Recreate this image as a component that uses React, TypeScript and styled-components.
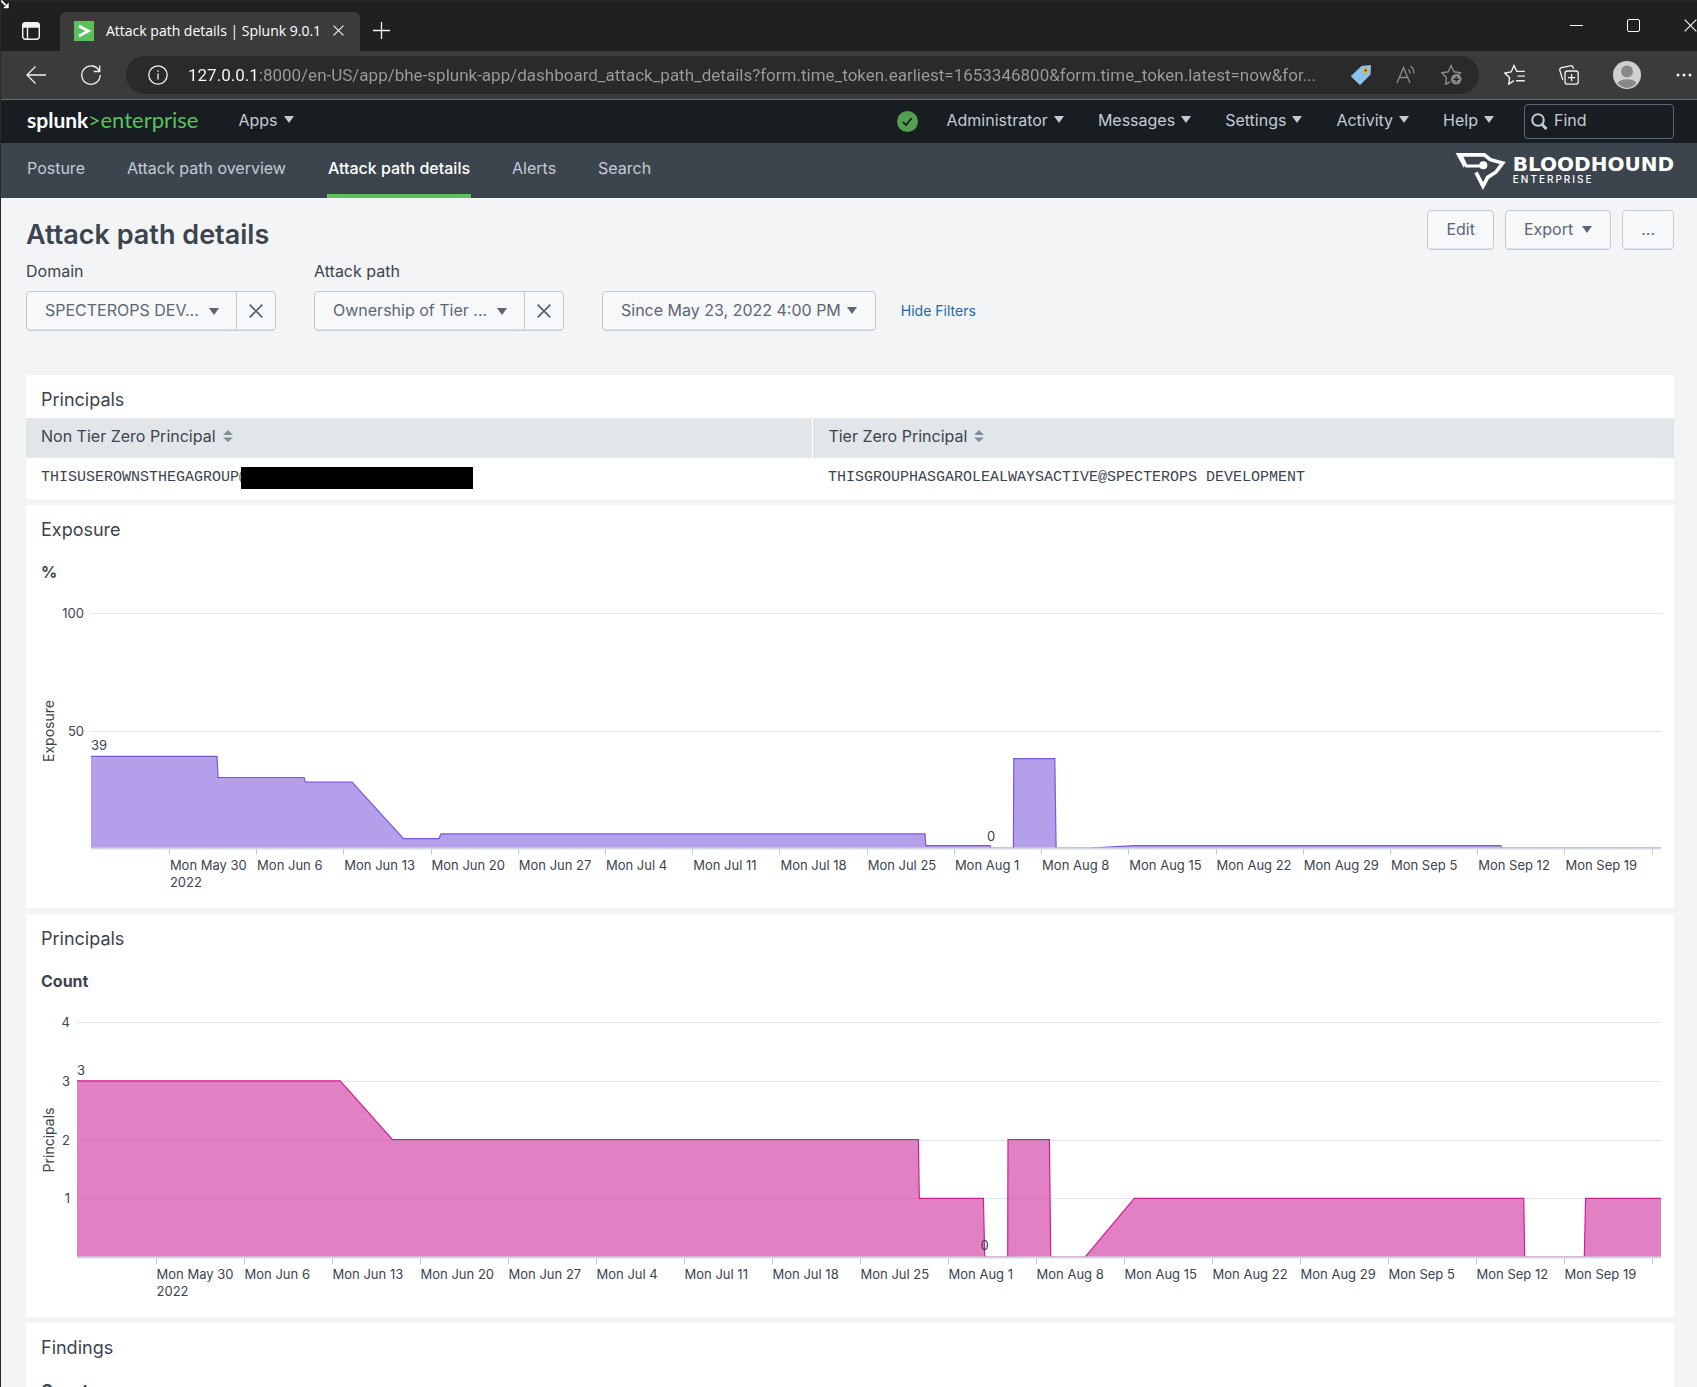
import React, { useLayoutEffect, useRef, useState } from 'react';
import styled, { createGlobalStyle } from 'styled-components';

const ui = '"Inter", "Liberation Sans", sans-serif';
const chrome = '"Open Sans", "Noto Sans", sans-serif';

const GlobalStyle = createGlobalStyle`
  *, *::before, *::after { box-sizing: border-box; }
  body { margin: 0; background: #f2f4f5; }
  button, input, select { font: inherit; color: inherit; margin: 0; }
  h1, h2, h3 { margin: 0; font-weight: 400; }
  svg { display: block; flex: none; }
`;

/* ---------- shell ---------- */

const Window = styled.div`
  position: relative;
  height: 100vh;
  overflow: hidden;
  display: flex;
  flex-direction: column;
  border-left: 1px solid #2b2b2b;
  background: #f2f4f5;
  color: #3c444d;
  font: 16px/20px ${ui};
`;

const Pointer = styled.svg`
  position: absolute;
  top: 0;
  left: 0;
`;

const IconButton = styled.button`
  display: flex;
  align-items: center;
  justify-content: center;
  padding: 0;
  border: 0;
  background: none;
  color: #f2f2f2;
`;

/* ---------- browser tab strip ---------- */

const TabStrip = styled.header`
  flex: none;
  height: 51px;
  display: flex;
  align-items: stretch;
  padding-left: 20px;
  border-top: 2px solid #282828;
  background: #202020;
  & > button { padding-top: 8px; }
`;

const TabItem = styled.div`
  display: flex;
  align-items: center;
  width: 300px;
  margin: 10px 13px 0 19px;
  padding: 0 16px 2px 14px;
  border-radius: 6px 6px 0 0;
  background: #3b3b3b;
  color: #fff;
  font: 14px/20px ${chrome};
`;

const TabTitle = styled.span`
  flex: 1;
  margin-left: 12px;
  white-space: nowrap;
`;

const WindowControls = styled.div`
  display: flex;
  gap: 44px;
  margin: 0 0 2px auto;
`;

/* ---------- browser toolbar ---------- */

const Toolbar = styled.div`
  flex: none;
  display: flex;
  align-items: center;
  height: 49px;
  padding: 0 4px 1px 25px;
  border-bottom: 1px solid #6a6c6e;
  background: #3b3b3b;
`;

const Group = styled.div<{ $gap: number }>`
  display: flex;
  align-items: center;
  gap: ${(p) => p.$gap}px;
`;

const AddressBar = styled.label`
  flex: 1;
  min-width: 0;
  display: flex;
  align-items: center;
  height: 38px;
  margin: 0 25px;
  padding: 0 17px 0 22px;
  border-radius: 19px;
  background: #2a2a2a;
`;

const Address = styled.input`
  flex: 1;
  min-width: 0;
  margin: 0 13px 0 20px;
  padding: 0;
  border: 0;
  outline: 0;
  font: 17px/24px Roboto, sans-serif;
  color: #9b9b9b;
  background: linear-gradient(90deg, #fff 71px, #9b9b9b 71px);
  background-clip: text;
  -webkit-background-clip: text;
  -webkit-text-fill-color: transparent;
`;

/* ---------- product bar ---------- */

const ProductBar = styled.div`
  flex: none;
  display: flex;
  align-items: center;
  height: 43px;
  padding: 0 23px 0 26px;
  background: #171d21;
  color: #c3cbd4;
`;

const Brand = styled.a`
  display: flex;
  align-items: baseline;
  margin-right: 40px;
  padding-bottom: 3px;
  color: #5cc05c;
  text-decoration: none;
  font: 22px/26px Lato, sans-serif;
`;

const BrandName = styled.b`
  font-size: 21px;
  color: #fff;
`;

const BrandMark = styled.span`
  font-size: 21px;
`;

const MenuButton = styled.button`
  display: flex;
  align-items: center;
  gap: 6px;
  padding: 0 0 4px;
  border: 0;
  background: none;
`;

const MenuBar = styled.nav`
  display: flex;
  align-items: center;
  gap: 34px;
  margin: 0 30px 0 28px;
`;

const StatusButton = styled(IconButton)`
  margin-left: auto;
`;

const FindBox = styled.label`
  display: flex;
  align-items: center;
  gap: 6px;
  width: 150px;
  height: 35px;
  padding: 0 6px;
  border: 1px solid #5c6773;
  border-radius: 4px;
`;

const FindInput = styled.input`
  width: 100%;
  min-width: 0;
  padding: 0 0 4px;
  border: 0;
  outline: 0;
  background: none;
  &::placeholder { color: #c3cbd4; opacity: 1; }
`;

/* ---------- app navigation ---------- */

const AppNav = styled.nav`
  flex: none;
  display: flex;
  align-items: stretch;
  justify-content: space-between;
  height: 55px;
  padding: 0 23px 0 25px;
  background: #3c444d;
`;

const NavLinks = styled.div`
  display: flex;
  gap: 40px;
`;

const NavLink = styled.a<{ $active?: boolean }>`
  display: flex;
  align-items: center;
  padding: 0 1px 2px;
  border-bottom: 4px solid ${(p) => (p.$active ? '#5cc05c' : 'transparent')};
  color: ${(p) => (p.$active ? '#fff' : '#c3cbd4')};
  font-weight: ${(p) => (p.$active ? 500 : 400)};
  text-decoration: none;
`;

const AppLogo = styled.div`
  display: flex;
  align-items: center;
  gap: 6px;
  color: #fff;
`;

const LogoName = styled.div`
  font: bold 20px/19px "DejaVu Sans", sans-serif;
`;

const LogoEdition = styled.div`
  padding-bottom: 2px;
  font: 500 10px/10px ${ui};
  letter-spacing: 2px;
`;

/* ---------- dashboard ---------- */

const Dashboard = styled.main`
  flex: 1;
  min-height: 0;
  padding: 12px 23px 0 25px;
`;

const TitleRow = styled.div`
  display: flex;
  justify-content: space-between;
  align-items: flex-start;
`;

const PageTitle = styled.h1`
  padding-top: 7px;
  font-size: 27px;
  line-height: 36px;
  font-weight: 600;
`;

const Button = styled.button`
  display: flex;
  align-items: center;
  gap: 9px;
  height: 40px;
  padding: 0 18px 2px;
  border: 1px solid #c3cbd4;
  border-radius: 4px;
  background: #f7f8fa;
  box-shadow: inset 0 -1px 0 #dfe3e8;
  color: #5c6773;
`;

const FilterRow = styled.div`
  display: flex;
  align-items: flex-end;
  margin: 8px 0 44px;
`;

const Field = styled.div`
  display: flex;
  flex-direction: column;
  gap: 10px;
  width: 250px;
  margin-right: 38px;
`;

const SelectGroup = styled.div`
  display: flex;
  height: 40px;
  border: 1px solid #c3cbd4;
  border-radius: 4px;
  background: #f7f8fa;
  box-shadow: inset 0 -1px 0 #dfe3e8;
  color: #5c6773;
`;

const SelectCell = styled.div`
  flex: 1;
  display: grid;
  align-items: center;
  & > * { grid-area: 1 / 1; }
  & > svg { justify-self: end; margin-right: 17px; pointer-events: none; }
`;

const Select = styled.select`
  appearance: none;
  width: 100%;
  padding: 0 30px 2px 18px;
  border: 0;
  outline: 0;
  background: none;
`;

const ClearButton = styled(IconButton)`
  width: 39px;
  border-left: 1px solid #c3cbd4;
  color: #5c6773;
`;

const TimeButton = styled(Button)`
  gap: 6px;
`;

const TextLink = styled.a`
  margin-left: 25px;
  font-size: 14px;
  line-height: 40px;
  color: #1e6aa8;
  text-decoration: none;
`;

const Panels = styled.div`
  display: flex;
  flex-direction: column;
  gap: 6px;
`;

const Panel = styled.section`
  padding-top: 13px;
  background: #fff;
`;

const PanelTitle = styled.h2`
  padding: 0 15px 6px;
  font-size: 18px;
  line-height: 24px;
`;

const ChartTitle = styled.h3`
  padding: 14px 15px 0;
  font-size: 16px;
  font-weight: 700;
`;

const ChartBox = styled.div`
  height: 326px;
  padding: 0 13px 6px 15px;
`;

const Table = styled.table`
  width: 100%;
  table-layout: fixed;
  border-collapse: collapse;
`;

const HeadCell = styled.th`
  height: 40px;
  padding: 0 15px 4px;
  background: #e1e6e9;
  text-align: left;
  font-weight: 400;
  &:first-child { width: 47.75%; border-right: 1px solid #fff; }
`;

const SortButton = styled.button`
  display: flex;
  align-items: center;
  gap: 7px;
  padding: 0;
  border: 0;
  background: none;
`;

const Cell = styled.td`
  height: 41px;
  padding: 0 15px 2px;
  font: 15px/24px "Liberation Mono", monospace;
  white-space: nowrap;
`;

const CellContent = styled.div`
  display: flex;
  align-items: center;
`;

const Redaction = styled.span`
  width: 232px;
  height: 22px;
  margin-left: -7px;
  background: #000;
`;

const AxisText = styled.text`
  font: 13px ${ui};
  fill: #3c444d;
`;

const AxisTitle = styled(AxisText)`
  font-size: 14px;
`;

/* ---------- icons ---------- */

const Caret = () => (
  <svg width="10" height="7" viewBox="0 0 10 7" fill="currentColor"><path d="M0 0h10L5 7z" /></svg>
);

const Cross = ({ size, stroke = 1.3 }: { size: number; stroke?: number }) => (
  <svg width={size} height={size} viewBox="0 0 12 12" stroke="currentColor" strokeWidth={stroke} fill="none">
    <path d="M.6.6l10.8 10.8M11.4.6L.6 11.4" />
  </svg>
);

const SortIcon = () => (
  <svg width="10" height="12" viewBox="0 0 10 12" fill="#818d99"><path d="M0 5l5-5 5 5zM0 7.5h10l-5 4.5z" /></svg>
);

const BloodhoundMark = () => (
  <svg width="52" height="38" viewBox="42 36 156 114" fill="none" stroke="#fff" strokeWidth="11">
    <path d="M44 39h18l14 30-8 14z" fill="#fff" stroke="none" />
    <path d="M52 44.500H130L148 59l37 10-20 27-25 16-14 26-21-41" />
    <path d="M56 47l20 31H122" strokeWidth="9" />
    <circle cx="127" cy="76" r="12" fill="#fff" stroke="none" />
  </svg>
);

const EdgeIcon = ({ size = 20, dim, children }: { size?: number; dim?: boolean; children: React.ReactNode }) => (
  <svg width={size} height={size} viewBox="0 0 20 20" fill="none" stroke={dim ? '#8c8c8c' : '#f2f2f2'} strokeWidth="1.3">
    {children}
  </svg>
);

/* ---------- area chart ---------- */

type Point = [number, number];

const SPAN_DAYS = 126;
const FIRST_TICK = 6.25;
const WEEKS = ['May 30', 'Jun 6', 'Jun 13', 'Jun 20', 'Jun 27', 'Jul 4', 'Jul 11', 'Jul 18', 'Jul 25', 'Aug 1', 'Aug 8',
  'Aug 15', 'Aug 22', 'Aug 29', 'Sep 5', 'Sep 12', 'Sep 19'];

const exposure: Point[] = [[0, 39], [10.11, 39], [10.2, 30], [17.1, 30], [17.2, 28], [20.95, 28], [25.08, 4], [27.93, 4],
  [28.09, 6], [66.93, 6], [67, 1], [72.15, 1], [72.23, 0], [74.03, 0], [74.06, 38], [77.35, 38], [77.45, 0], [80.2, 0],
  [83.79, 1], [113.12, 1], [113.24, 0], [126, 0]];

const principals: Point[] = [[0, 3], [20.94, 3], [25.08, 2], [66.93, 2], [67, 1], [72.1, 1], [72.2, 0], [74.03, 0],
  [74.06, 2], [77.35, 2], [77.45, 0], [80.2, 0], [84.1, 1], [115.08, 1], [115.16, 0], [119.9, 0], [120, 1], [126, 1]];

interface ChartProps {
  name: string;
  data: Point[];
  max: number;
  ticks: number[];
  left: number;
  color: string;
}

const AreaChart = ({ name, data, max, ticks, left, color }: ChartProps) => {
  const box = useRef<HTMLDivElement>(null);
  const [width, setWidth] = useState(0);
  useLayoutEffect(() => {
    const el = box.current!;
    const measure = () => {
      const s = getComputedStyle(el);
      setWidth(el.clientWidth - parseFloat(s.paddingLeft) - parseFloat(s.paddingRight));
    };
    measure();
    const observer = new ResizeObserver(measure);
    observer.observe(el);
    return () => observer.disconnect();
  }, []);

  const top = 31;
  const base = 266;
  const x = (d: number) => left + (d / SPAN_DAYS) * (width - left);
  const y = (v: number) => base - (v / max) * (base - top);
  const line = data.map(([d, v]) => `${x(d).toFixed(1)},${y(v).toFixed(1)}`).join(' L');
  const zero = data.find(([, v]) => v === 0)!;
  const tickDays = [...WEEKS, ''].map((_, i) => FIRST_TICK + i * 7);

  return (
    <ChartBox ref={box}>
      {width > 0 && (
        <svg width={width} height="320" role="img" aria-label={`${name} over time`}>
          <g stroke="#e1e6eb">
            {ticks.map((t) => <path key={t} d={`M${left} ${Math.round(y(t)) + 0.5}H${width}`} />)}
          </g>
          <path d={`M${left},${base} L${line} L${width},${base}Z`} fill={color} fillOpacity="0.57" />
          <path d={`M${line}`} fill="none" stroke={color} strokeWidth="1.2" />
          <path d={`M${left} ${base + 0.5}H${width}`} stroke="#d3d7e4" strokeWidth="2" />
          <g stroke="#c3cbd4">
            {tickDays.map((d) => <path key={d} d={`M${Math.round(x(d)) + 0.5} ${base + 1}v6`} />)}
          </g>
          {ticks.map((t) => <AxisText key={t} x={left - 7} y={y(t) + 5} textAnchor="end">{t}</AxisText>)}
          {WEEKS.map((w, i) => <AxisText key={w} x={x(tickDays[i]) + 1} y={288}>{`Mon ${w}`}</AxisText>)}
          <AxisText x={x(FIRST_TICK) + 1} y={305}>2022</AxisText>
          <AxisText x={left} y={y(data[0][1]) - 6}>{data[0][1]}</AxisText>
          <AxisText x={x(zero[0])} y={base - 7} textAnchor="middle">0</AxisText>
          <AxisTitle transform="translate(13 149) rotate(-90)" textAnchor="middle">{name}</AxisTitle>
        </svg>
      )}
    </ChartBox>
  );
};

/* ---------- page ---------- */

const SelectField = ({ id, label, value }: { id: string; label: string; value: string }) => (
  <Field>
    <label htmlFor={id}>{label}</label>
    <SelectGroup>
      <SelectCell>
        <Select id={id}><option>{value}</option></Select>
        <Caret />
      </SelectCell>
      <ClearButton aria-label={`Clear ${label}`}><Cross size={14} stroke={1.6} /></ClearButton>
    </SelectGroup>
  </Field>
);

const url = '127.0.0.1:8000/en-US/app/bhe-splunk-app/dashboard_attack_path_details?form.time_token.earliest=1653346800&form.time_token.latest=now&for...';

export default function App() {
  return (
    <Window>
      <GlobalStyle />
      <TabStrip>
        <IconButton aria-label="Tab actions">
          <svg width="20" height="20" viewBox="0 0 20 20" fill="none" stroke="#f2f2f2" strokeWidth="1.400">
            <rect x="1.700" y="1.700" width="16.600" height="16.600" rx="3" />
            <path d="M2 4.500a2.500 2.500 0 0 1 2.500-2.500h11a2.500 2.500 0 0 1 2.500 2.500V6H2z" fill="#f2f2f2" />
            <path d="M6.500 6v12" />
          </svg>
        </IconButton>
        <TabItem>
          <svg width="20" height="20" viewBox="0 0 20 20">
            <path d="M0 0h20v20H0z" fill="#5cc05c" />
            <path d="M5 5l9.500 5L5 15" fill="none" stroke="#fff" strokeWidth="2.600" />
          </svg>
          <TabTitle>Attack path details | Splunk 9.0.1</TabTitle>
          <IconButton aria-label="Close tab"><Cross size={11} /></IconButton>
        </TabItem>
        <IconButton aria-label="New tab">
          <svg width="17" height="17" viewBox="0 0 17 17" stroke="#f2f2f2" strokeWidth="1.300"><path d="M8.500 0v17M0 8.500h17" /></svg>
        </IconButton>
        <WindowControls>
          <IconButton aria-label="Minimize">
            <svg width="13" height="13" viewBox="0 0 13 13" stroke="#fff"><path d="M0 6.500h13" /></svg>
          </IconButton>
          <IconButton aria-label="Maximize">
            <svg width="13" height="13" viewBox="0 0 13 13" stroke="#fff" fill="none"><rect x=".5" y=".5" width="12" height="12" rx="1.500" /></svg>
          </IconButton>
          <IconButton aria-label="Close window"><Cross size={13} stroke={1.1} /></IconButton>
        </WindowControls>
      </TabStrip>

      <Toolbar>
        <Group $gap={35}>
          <IconButton aria-label="Back">
            <EdgeIcon><path d="M20 10H.8M9.500 1.500L1 10l8.500 8.500" /></EdgeIcon>
          </IconButton>
          <IconButton aria-label="Refresh">
            <EdgeIcon><path d="M18.500 6.500A9.200 9.200 0 1 0 19.200 10M18.700.5v6h-6" /></EdgeIcon>
          </IconButton>
        </Group>
        <AddressBar>
          <EdgeIcon>
            <circle cx="10" cy="10" r="9.200" />
            <path d="M10 8.500v6M10 5.200v1.500" />
          </EdgeIcon>
          <Address aria-label="Address" defaultValue={url} />
          <Group $gap={25}>
            <svg width="20" height="20" viewBox="0 0 20 20">
              <path d="M10.500 1L19 0q1 0 1 1l-.5 8.500L9.700 19.500q-.7.700-1.400 0L.5 12q-.8-.8 0-1.500z" fill="#8ac1ee" />
              <circle cx="14.600" cy="5.400" r="2.800" fill="#e3b420" />
              <circle cx="14.600" cy="5.400" r="1.100" fill="#3b3b3b" />
            </svg>
            <IconButton aria-label="Read aloud">
              <EdgeIcon dim>
                <path d="M1 18L7.500 2.500 14 18M3.300 12.500h8.400M12.500 4.500a6 6 0 0 1 1.500 4M14.500 1a9.500 9.500 0 0 1 3.500 7.500" />
              </EdgeIcon>
            </IconButton>
            <IconButton aria-label="Add to favorites">
              <EdgeIcon size={21} dim>
                <path d="M9 17l-4.600 2.200.8-6.200L.8 8.400l6.100-1L9.600 1.500l2.800 5.900 6.100 1-2 2" />
                <circle cx="14.500" cy="14.500" r="5" fill="#8c8c8c" stroke="none" />
                <path d="M14.500 11.700v5.600M11.700 14.500h5.600" stroke="#2a2a2a" />
              </EdgeIcon>
            </IconButton>
          </Group>
        </AddressBar>
        <Group $gap={34}>
          <IconButton aria-label="Favorites">
            <EdgeIcon size={21}>
              <path d="M9.500 15.800L4.400 19.200l1-6.200L.8 8.600l6-1L9.500 1.500l2.700 5.500h7.600M13 11.500h6.800M11.500 16h8.300" />
            </EdgeIcon>
          </IconButton>
          <IconButton aria-label="Collections">
            <EdgeIcon>
              <rect x="6" y="6" width="13.200" height="13.200" rx="2.500" />
              <path d="M12.600 9v7.200M9 12.600h7.200M3.800 15L.9 5.500Q.3 3.300 2.500 2.600L11.500.8q2-.3 2.700 1.700l.5 1.200" />
            </EdgeIcon>
          </IconButton>
          <IconButton aria-label="Profile">
            <svg width="28" height="28" viewBox="0 0 28 28">
              <circle cx="14" cy="14" r="14" fill="#d2d0ce" />
              <circle cx="14" cy="10.500" r="6" fill="#8a8886" />
              <path d="M4.500 22a10 5.500 0 0 1 19 0A13 13 0 0 1 14 27a13 13 0 0 1-9.500-5z" fill="#8a8886" />
            </svg>
          </IconButton>
          <IconButton aria-label="Settings and more">
            <svg width="18" height="4" viewBox="0 0 18 4" fill="#f2f2f2">
              <circle cx="3" cy="2" r="1.500" /><circle cx="9" cy="2" r="1.500" /><circle cx="15" cy="2" r="1.500" />
            </svg>
          </IconButton>
        </Group>
      </Toolbar>

      <ProductBar>
        <Brand href="#home"><BrandName>splunk</BrandName><BrandMark>&gt;</BrandMark>enterprise</Brand>
        <MenuButton>Apps <Caret /></MenuButton>
        <StatusButton aria-label="Health status">
          <svg width="21" height="21" viewBox="0 0 21 21">
            <circle cx="10.500" cy="10.500" r="10.500" fill="#53a051" />
            <path d="M5.800 11l3.200 3 5.600-6.800" fill="none" stroke="#171d21" strokeWidth="1.800" />
          </svg>
        </StatusButton>
        <MenuBar>
          {['Administrator', 'Messages', 'Settings', 'Activity', 'Help'].map((m) => (
            <MenuButton key={m}>{m} <Caret /></MenuButton>
          ))}
        </MenuBar>
        <FindBox>
          <svg width="17" height="17" viewBox="0 0 17 17" fill="none" stroke="#c3cbd4">
            <circle cx="7" cy="7" r="5.800" strokeWidth="2" />
            <path d="M11 11.500l4.500 4.500" strokeWidth="3" />
          </svg>
          <FindInput placeholder="Find" aria-label="Find" />
        </FindBox>
      </ProductBar>

      <AppNav>
        <NavLinks>
          <NavLink href="#posture">Posture</NavLink>
          <NavLink href="#overview">Attack path overview</NavLink>
          <NavLink href="#details" $active>Attack path details</NavLink>
          <NavLink href="#alerts">Alerts</NavLink>
          <NavLink href="#search">Search</NavLink>
        </NavLinks>
        <AppLogo>
          <BloodhoundMark />
          <div>
            <LogoName>BLOODHOUND</LogoName>
            <LogoEdition>ENTERPRISE</LogoEdition>
          </div>
        </AppLogo>
      </AppNav>

      <Dashboard>
        <TitleRow>
          <PageTitle>Attack path details</PageTitle>
          <Group $gap={11}>
            <Button>Edit</Button>
            <Button>Export <Caret /></Button>
            <Button aria-label="More actions">...</Button>
          </Group>
        </TitleRow>

        <FilterRow>
          <SelectField id="domain" label="Domain" value="SPECTEROPS DEV..." />
          <SelectField id="attack-path" label="Attack path" value="Ownership of Tier ..." />
          <TimeButton aria-haspopup="dialog">Since May 23, 2022 4:00 PM <Caret /></TimeButton>
          <TextLink href="#filters">Hide Filters</TextLink>
        </FilterRow>

        <Panels>
          <Panel>
            <PanelTitle>Principals</PanelTitle>
            <Table>
              <thead>
                <tr>
                  <HeadCell><SortButton>Non Tier Zero Principal <SortIcon /></SortButton></HeadCell>
                  <HeadCell><SortButton>Tier Zero Principal <SortIcon /></SortButton></HeadCell>
                </tr>
              </thead>
              <tbody>
                <tr>
                  <Cell><CellContent>THISUSEROWNSTHEGAGROUP@<Redaction /></CellContent></Cell>
                  <Cell>THISGROUPHASGAROLEALWAYSACTIVE@SPECTEROPS DEVELOPMENT</Cell>
                </tr>
              </tbody>
            </Table>
          </Panel>

          <Panel>
            <PanelTitle>Exposure</PanelTitle>
            <ChartTitle>%</ChartTitle>
            <AreaChart name="Exposure" data={exposure} max={100} ticks={[50, 100]} left={50} color="#7b56db" />
          </Panel>

          <Panel>
            <PanelTitle>Principals</PanelTitle>
            <ChartTitle>Count</ChartTitle>
            <AreaChart name="Principals" data={principals} max={4} ticks={[1, 2, 3, 4]} left={36} color="#cb2196" />
          </Panel>

          <Panel>
            <PanelTitle>Findings</PanelTitle>
            <ChartTitle>Count</ChartTitle>
          </Panel>
        </Panels>
      </Dashboard>

      <Pointer width="10" height="10" viewBox="0 0 10 10">
        <path d="M0 .5l5.500 5.500" stroke="#fff" strokeWidth="1.800" />
        <path d="M8 2v6.500H1.500z" fill="#fff" stroke="#000" strokeWidth=".5" />
      </Pointer>
    </Window>
  );
}
